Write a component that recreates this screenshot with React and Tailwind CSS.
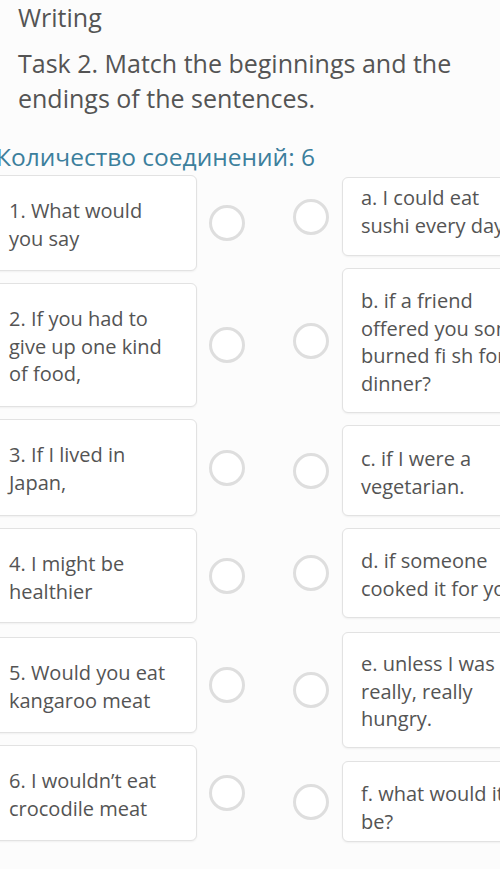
import React from "react";

const left = [
  { t: "1. What would you say", h: 96, mt: 0 },
  { t: "2. If you had to give up one kind of food,", h: 124, mt: 12 },
  { t: "3. If I lived in Japan,", h: 97, mt: 12 },
  { t: "4. I might be healthier", h: 95, mt: 12 },
  { t: "5. Would you eat kangaroo meat", h: 96, mt: 14 },
  { t: "6. I wouldn\u2019t eat crocodile meat", h: 96, mt: 12 },
];

const right = [
  { t: "a. I could eat sushi every day.", h: 79, mt: 2, pt: 6 },
  { t: "b. if a friend offered you some burned fi sh for dinner?", h: 145, mt: 12, pt: 18 },
  { t: "c. if I were a vegetarian.", h: 91, mt: 12, pt: 19 },
  { t: "d. if someone cooked it for you.", h: 90, mt: 12, pt: 18 },
  { t: "e. unless I was really, really hungry.", h: 116, mt: 14, pt: 17 },
  { t: "f. what would it be?", h: 81, mt: 13, pt: 18 },
];

function Circle() {
  return <div className="w-[36px] h-[36px] shrink-0 rounded-full border-[3px] border-[#dedede] bg-white" />;
}

export default function App() {
  return (
    <div className="w-[500px] h-[869px] overflow-hidden bg-[#fcfcfc] text-[#545454] font-['Open_Sans',sans-serif]">
      <div className="pl-[18px] pt-[1px] text-[25px] leading-[33px]">Writing</div>
      <div className="pl-[18px] pr-[20px] mt-[12px] text-[25px] leading-[35px]">
        Task 2. Match the beginnings and the endings of the sentences.
      </div>
      <div className="ml-[-4px] mt-[25px] text-[24.5px] leading-[32px] text-[#3c7f9c] whitespace-nowrap">
        Количество соединений: 6
      </div>
      <div className="flex ml-[-10px] mt-[2px] w-[700px]">
        <div className="flex flex-col">
          {left.map((c, i) => (
            <div key={i} className="flex items-center" style={{ marginTop: c.mt, height: c.h }}>
              <div
                className="w-[207px] h-full shrink-0 rounded-[6px] border border-[#e2e2e2] bg-white shadow-[0_1px_2px_rgba(0,0,0,0.05)] pl-[18px] pr-[18px] pt-[21px] text-[20px] leading-[27.5px]"
              >
                {c.t}
              </div>
              <div className="ml-[12px]">
                <Circle />
              </div>
            </div>
          ))}
        </div>
        <div className="flex flex-col ml-[48px]">
          {right.map((c, i) => (
            <div key={i} className="flex items-center" style={{ marginTop: c.mt, height: c.h }}>
              <Circle />
              <div
                className="ml-[13px] w-[207px] h-full shrink-0 rounded-[6px] border border-[#e2e2e2] bg-white shadow-[0_1px_2px_rgba(0,0,0,0.05)] pl-[18px] pr-[18px] text-[20px] leading-[27.5px]"
                style={{ paddingTop: c.pt }}
              >
                {c.t}
              </div>
            </div>
          ))}
        </div>
      </div>
    </div>
  );
}
